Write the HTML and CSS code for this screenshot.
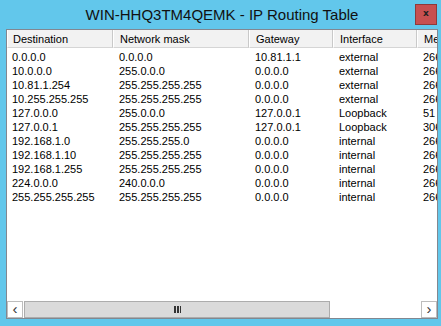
FILE: index.html
```html
<!DOCTYPE html>
<html lang="en">
<head>
    <meta charset="UTF-8">
    <title>IP Routing Table</title>
    <link rel="stylesheet" href="styles.css">
</head>
<body>
    <div class="window">
        <div class="title-bar">
            <span></span>
            <span class="title">WIN-HHQ3TM4QEMK - IP Routing Table</span>
            <button class="close-btn">x</button>
        </div>

        <div class="list-view">
            <div class="list-row list-header">
                <div class="cell">Destination</div>
                <div class="cell">Network mask</div>
                <div class="cell">Gateway</div>
                <div class="cell">Interface</div>
                <div class="cell">Metric</div>
            </div>

            <div class="list-body">
                <div class="list-row"><div class="cell">0.0.0.0</div><div class="cell">0.0.0.0</div><div class="cell">10.81.1.1</div><div class="cell">external</div><div class="cell">266</div></div>
                <div class="list-row"><div class="cell">10.0.0.0</div><div class="cell">255.0.0.0</div><div class="cell">0.0.0.0</div><div class="cell">external</div><div class="cell">266</div></div>
                <div class="list-row"><div class="cell">10.81.1.254</div><div class="cell">255.255.255.255</div><div class="cell">0.0.0.0</div><div class="cell">external</div><div class="cell">266</div></div>
                <div class="list-row"><div class="cell">10.255.255.255</div><div class="cell">255.255.255.255</div><div class="cell">0.0.0.0</div><div class="cell">external</div><div class="cell">266</div></div>
                <div class="list-row"><div class="cell">127.0.0.0</div><div class="cell">255.0.0.0</div><div class="cell">127.0.0.1</div><div class="cell">Loopback</div><div class="cell">51</div></div>
                <div class="list-row"><div class="cell">127.0.0.1</div><div class="cell">255.255.255.255</div><div class="cell">127.0.0.1</div><div class="cell">Loopback</div><div class="cell">306</div></div>
                <div class="list-row"><div class="cell">192.168.1.0</div><div class="cell">255.255.255.0</div><div class="cell">0.0.0.0</div><div class="cell">internal</div><div class="cell">266</div></div>
                <div class="list-row"><div class="cell">192.168.1.10</div><div class="cell">255.255.255.255</div><div class="cell">0.0.0.0</div><div class="cell">internal</div><div class="cell">266</div></div>
                <div class="list-row"><div class="cell">192.168.1.255</div><div class="cell">255.255.255.255</div><div class="cell">0.0.0.0</div><div class="cell">internal</div><div class="cell">266</div></div>
                <div class="list-row"><div class="cell">224.0.0.0</div><div class="cell">240.0.0.0</div><div class="cell">0.0.0.0</div><div class="cell">internal</div><div class="cell">266</div></div>
                <div class="list-row"><div class="cell">255.255.255.255</div><div class="cell">255.255.255.255</div><div class="cell">0.0.0.0</div><div class="cell">internal</div><div class="cell">266</div></div>
            </div>

            <div class="h-scroll">
                <div class="scroll-btn">&#8249;</div>
                <div class="scroll-track">
                    <div class="scroll-thumb"><span class="grip"></span></div>
                </div>
                <div class="scroll-btn">&#8250;</div>
            </div>
        </div>
    </div>
</body>
</html>
```

FILE: styles.css
```css
html, body {
    margin: 0;
    padding: 0;
    height: 100%;
}

body {
    background-color: #62c7eb;
    font-family: 'Liberation Sans', Arial, sans-serif;
    color: #000;
}

.window {
    display: flex;
    flex-direction: column;
    height: 326px;
    padding: 0 3px 7px 6px;
    box-sizing: border-box;
}

.title-bar {
    display: grid;
    grid-template-columns: 1fr auto 1fr;
    align-items: start;
    height: 29px;
}

.title {
    font-size: 15px;
    color: #111;
    padding-top: 6px;
}

.close-btn {
    justify-self: end;
    width: 22px;
    height: 21px;
    margin-top: 4px;
    margin-right: 1px;
    padding: 0 0 3px 0;
    background-color: #c75050;
    border: 1px solid #8e3a3a;
    color: #222;
    font-family: 'DejaVu Sans', sans-serif;
    font-size: 9px;
    font-weight: bold;
    line-height: 1;
}

.list-view {
    flex: 1;
    display: flex;
    flex-direction: column;
    background-color: #fff;
    border: 1px solid #828790;
    overflow: hidden;
    font-size: 11px;
}

.list-row {
    display: grid;
    grid-template-columns: 106px 136px 84px 84px 60px;
    height: 14px;
    line-height: 14px;
    white-space: nowrap;
}

.list-row .cell {
    padding-left: 6px;
    overflow: hidden;
}

.list-row .cell:first-child {
    padding-left: 5px;
}

.list-header {
    height: 18px;
    line-height: 18px;
    margin-bottom: 2px;
}

.list-header .cell {
    background-color: #f2f2f2;
    border-left: 1px solid #fff;
    border-right: 1px solid #c9c9c9;
    border-bottom: 1px solid #d5d5d5;
}

.list-body {
    flex: 1;
}

.h-scroll {
    display: flex;
    height: 17px;
    border-top: 1px solid #fff;
}

.scroll-btn {
    width: 16px;
    border: 1px solid #bdbdbd;
    background-color: #fff;
    font-size: 15px;
    line-height: 14px;
    text-align: center;
    color: #333;
    box-sizing: border-box;
}

.scroll-track {
    flex: 1;
    background-color: #fff;
    padding: 0 1px;
    display: flex;
}

.scroll-thumb {
    width: 306px;
    background-color: #dadada;
    border: 1px solid #acacac;
    box-sizing: border-box;
    display: flex;
    align-items: center;
    justify-content: center;
}

.grip {
    width: 7px;
    height: 7px;
    background: repeating-linear-gradient(90deg, #333 0, #333 2px, transparent 2px, transparent 3px);
}
```
